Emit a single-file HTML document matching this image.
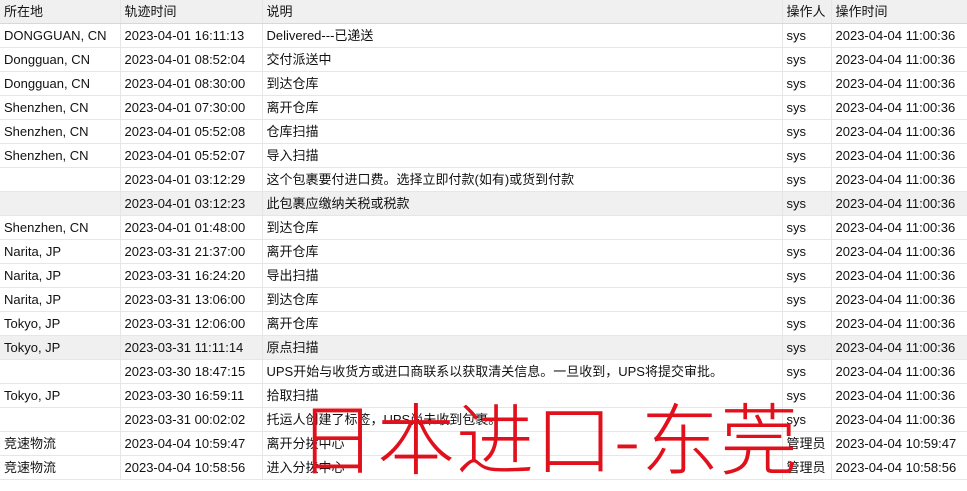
<!DOCTYPE html>
<html><head><meta charset="utf-8"><style>
body{margin:0;width:967px;height:490px;background:#fff;overflow:hidden;position:relative;font-family:"Liberation Sans","Noto Sans CJK SC",sans-serif;font-size:13px;color:#111}
table{border-collapse:collapse;table-layout:fixed;width:967px;position:absolute;top:0;left:0}
td{height:22px;padding:1px 0 0 4px;border-bottom:1px solid #e6e6e6;border-right:1px solid #e6e6e6;white-space:nowrap;overflow:hidden;line-height:22px}
tr.h td{background:#f0f0f0;border-bottom:1px solid #d8d8d8}
tr.g td{background:#f0f0f0}
.ov{position:absolute;left:298px;top:390px;font-size:78px;color:#e0101c;font-family:"Noto Sans CJK SC",sans-serif;font-weight:200;line-height:90px;letter-spacing:1px;white-space:nowrap}
</style></head><body>
<table>
<colgroup><col style="width:120px"><col style="width:142px"><col style="width:520px"><col style="width:49px"><col style="width:136px"></colgroup>
<tr class="h"><td>所在地</td><td>轨迹时间</td><td>说明</td><td>操作人</td><td>操作时间</td></tr>
<tr><td>DONGGUAN, CN</td><td>2023-04-01 16:11:13</td><td>Delivered---已递送</td><td>sys</td><td>2023-04-04 11:00:36</td></tr>
<tr><td>Dongguan, CN</td><td>2023-04-01 08:52:04</td><td>交付派送中</td><td>sys</td><td>2023-04-04 11:00:36</td></tr>
<tr><td>Dongguan, CN</td><td>2023-04-01 08:30:00</td><td>到达仓库</td><td>sys</td><td>2023-04-04 11:00:36</td></tr>
<tr><td>Shenzhen, CN</td><td>2023-04-01 07:30:00</td><td>离开仓库</td><td>sys</td><td>2023-04-04 11:00:36</td></tr>
<tr><td>Shenzhen, CN</td><td>2023-04-01 05:52:08</td><td>仓库扫描</td><td>sys</td><td>2023-04-04 11:00:36</td></tr>
<tr><td>Shenzhen, CN</td><td>2023-04-01 05:52:07</td><td>导入扫描</td><td>sys</td><td>2023-04-04 11:00:36</td></tr>
<tr><td></td><td>2023-04-01 03:12:29</td><td>这个包裹要付进口费。选择立即付款(如有)或货到付款</td><td>sys</td><td>2023-04-04 11:00:36</td></tr>
<tr class="g"><td></td><td>2023-04-01 03:12:23</td><td>此包裹应缴纳关税或税款</td><td>sys</td><td>2023-04-04 11:00:36</td></tr>
<tr><td>Shenzhen, CN</td><td>2023-04-01 01:48:00</td><td>到达仓库</td><td>sys</td><td>2023-04-04 11:00:36</td></tr>
<tr><td>Narita, JP</td><td>2023-03-31 21:37:00</td><td>离开仓库</td><td>sys</td><td>2023-04-04 11:00:36</td></tr>
<tr><td>Narita, JP</td><td>2023-03-31 16:24:20</td><td>导出扫描</td><td>sys</td><td>2023-04-04 11:00:36</td></tr>
<tr><td>Narita, JP</td><td>2023-03-31 13:06:00</td><td>到达仓库</td><td>sys</td><td>2023-04-04 11:00:36</td></tr>
<tr><td>Tokyo, JP</td><td>2023-03-31 12:06:00</td><td>离开仓库</td><td>sys</td><td>2023-04-04 11:00:36</td></tr>
<tr class="g"><td>Tokyo, JP</td><td>2023-03-31 11:11:14</td><td>原点扫描</td><td>sys</td><td>2023-04-04 11:00:36</td></tr>
<tr><td></td><td>2023-03-30 18:47:15</td><td>UPS开始与收货方或进口商联系以获取清关信息。一旦收到，UPS将提交审批。</td><td>sys</td><td>2023-04-04 11:00:36</td></tr>
<tr><td>Tokyo, JP</td><td>2023-03-30 16:59:11</td><td>拾取扫描</td><td>sys</td><td>2023-04-04 11:00:36</td></tr>
<tr><td></td><td>2023-03-31 00:02:02</td><td>托运人创建了标签，UPS尚未收到包裹。</td><td>sys</td><td>2023-04-04 11:00:36</td></tr>
<tr><td>竞速物流</td><td>2023-04-04 10:59:47</td><td>离开分拨中心</td><td>管理员</td><td>2023-04-04 10:59:47</td></tr>
<tr><td>竞速物流</td><td>2023-04-04 10:58:56</td><td>进入分拨中心</td><td>管理员</td><td>2023-04-04 10:58:56</td></tr>
</table>
<div class="ov">日本进口-东莞</div>
</body></html>
